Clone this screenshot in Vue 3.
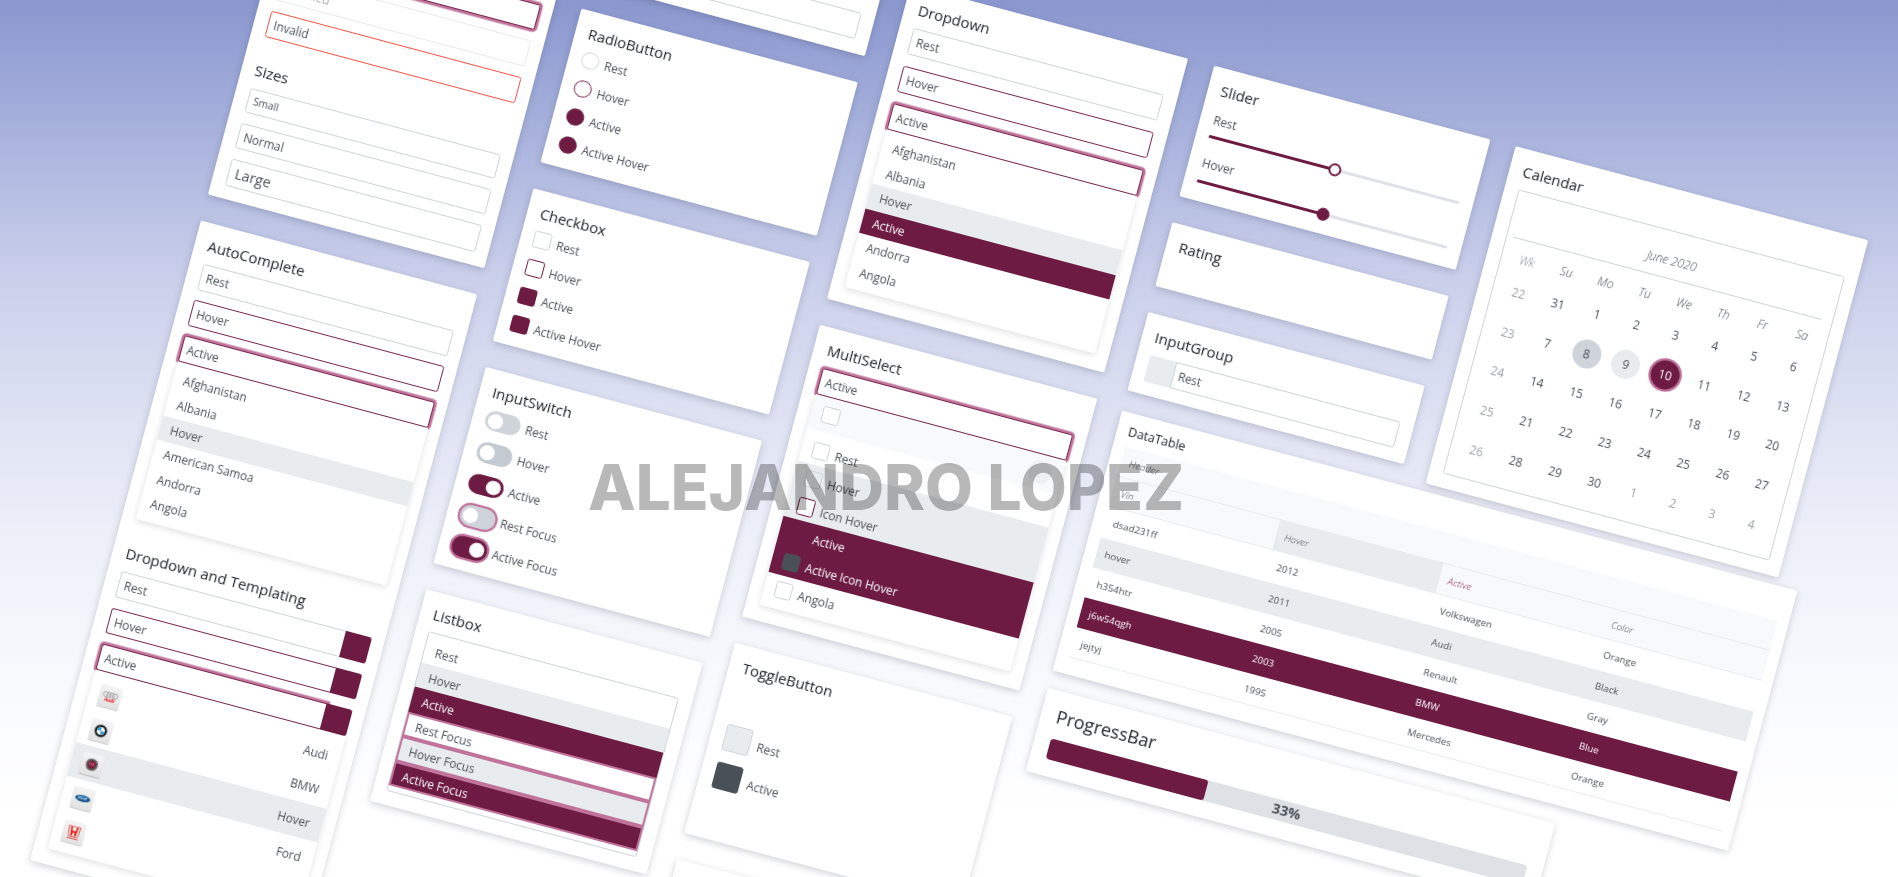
<script setup>
const countries = ['Afghanistan', 'Albania', 'Hover', 'American Samoa', 'Andorra', 'Angola']
const dropdownItems = ['Afghanistan', 'Albania', 'Hover', 'Active', 'Andorra', 'Angola']
const cars = [
  { brand: 'audi', label: 'Audi' },
  { brand: 'bmw', label: 'BMW' },
  { brand: 'fiat', label: 'Hover' },
  { brand: 'ford', label: 'Ford' },
  { brand: 'honda', label: '' },
]
const choices = [
  { label: 'Rest', state: 'rest' },
  { label: 'Hover', state: 'hover' },
  { label: 'Active', state: 'active' },
  { label: 'Active Hover', state: 'active' },
]
const switches = [
  { label: 'Rest', state: 'rest' },
  { label: 'Hover', state: 'over' },
  { label: 'Active', state: 'on' },
  { label: 'Rest Focus', state: 'rest focus' },
  { label: 'Active Focus', state: 'on focus' },
]
const listItems = [
  { label: 'Rest', state: '' },
  { label: 'Hover', state: 'hover' },
  { label: 'Active', state: 'active' },
  { label: 'Rest Focus', state: 'ring' },
  { label: 'Hover Focus', state: 'hover ring' },
  { label: 'Active Focus', state: 'active ring' },
]
const multiItems = [
  { label: 'Rest', row: '', box: 'rest' },
  { label: 'Hover', row: 'hover', box: 'clear' },
  { label: 'Icon Hover', row: 'hover', box: 'hover' },
  { label: 'Active', row: 'active', box: 'active' },
  { label: 'Active Icon Hover', row: 'active', box: 'dark' },
  { label: 'Angola', row: '', box: 'rest' },
]
const tableRows = [
  { cells: ['dsad231ff', '2012', 'Volkswagen', 'Orange'], state: '' },
  { cells: ['hover', '2011', 'Audi', 'Black'], state: 'hover' },
  { cells: ['h354htr', '2005', 'Renault', 'Gray'], state: '' },
  { cells: ['j6w54qgh', '2003', 'BMW', 'Blue'], state: 'active' },
  { cells: ['jejtyj', '1995', 'Mercedes', 'Orange'], state: 'last' },
]
const weekDays = ['Wk', 'Su', 'Mo', 'Tu', 'We', 'Th', 'Fr', 'Sa']
const weeks = [
  [22, 31, 1, 2, 3, 4, 5, 6],
  [23, 7, 8, 9, 10, 11, 12, 13],
  [24, 14, 15, 16, 17, 18, 19, 20],
  [25, 21, 22, 23, 24, 25, 26, 27],
  [26, 28, 29, 30, 1, 2, 3, 4],
]
function dayClass(w, d) {
  if (d === 0 || (w === 4 && d > 3)) return 'muted'
  if (w === 1 && d === 2) return 'today'
  if (w === 1 && d === 3) return 'over'
  if (w === 1 && d === 4) return 'picked'
  return ''
}
const progress = 33
</script>

<template>
  <main class="scene">
    <div class="board">
      <section class="column">
        <article class="card inputs">
          <div class="field focus"></div>
          <div class="field disabled">Disabled</div>
          <div class="field invalid">Invalid</div>
          <h2 class="sizes">Sizes</h2>
          <div class="field small">Small</div>
          <div class="field">Normal</div>
          <div class="field large">Large</div>
        </article>

        <article class="card autocomplete">
          <h2>AutoComplete</h2>
          <div class="stack">
            <div class="field">Rest</div>
            <div class="field hover">Hover</div>
            <div class="field focus">Active</div>
          </div>
          <ul class="panel">
            <li v-for="c in countries" :key="c" :class="{ hover: c === 'Hover' }">{{ c }}</li>
          </ul>
          <h2 class="second">Dropdown and Templating</h2>
          <div class="stack templ">
            <div class="group"><div class="field">Rest</div><i class="btn"></i></div>
            <div class="group"><div class="field hover">Hover</div><i class="btn"></i></div>
            <div class="group"><div class="field focus">Active</div><i class="btn"></i></div>
          </div>
          <ul class="panel car-panel">
            <li v-for="c in cars" :key="c.brand" :class="{ hover: c.label === 'Hover' }">
              <span class="tile">
                <svg viewBox="0 0 22 22" width="22" height="22">
                  <g v-if="c.brand === 'audi'">
                    <g fill="none" stroke="#9a9a9a" stroke-width=".8">
                      <circle cx="6.4" cy="9" r="2.5" /><circle cx="9.6" cy="9" r="2.5" />
                      <circle cx="12.8" cy="9" r="2.5" /><circle cx="16" cy="9" r="2.5" />
                    </g>
                    <text x="11.2" y="16" class="audi-name">Audi</text>
                  </g>
                  <g v-else-if="c.brand === 'bmw'">
                    <circle cx="11" cy="11" r="6.3" fill="#17191b" />
                    <circle cx="11" cy="11" r="6" fill="none" stroke="#70767a" stroke-width=".5" />
                    <circle cx="11" cy="11" r="4" fill="#fff" />
                    <path d="M11 11V7.2A3.8 3.8 0 0 0 7.2 11ZM11 11V14.8A3.8 3.8 0 0 0 14.8 11Z" fill="#3a9bd0" />
                  </g>
                  <g v-else-if="c.brand === 'fiat'">
                    <circle cx="11" cy="11" r="6.2" fill="#4e4b4c" />
                    <circle cx="11" cy="11" r="5.5" fill="none" stroke="#a09c9c" stroke-width=".7" />
                    <path d="M7.1 8.2Q11 6.6 14.9 8.2Q15.2 13 11 15.2Q6.8 13 7.1 8.2Z" fill="#8d1238" />
                    <path d="M8.5 9v3.2M8.5 9h1.2M8.5 10.4h1M10.6 9v3.2M11.6 12.2L12.3 9l.7 3.2M13.5 9h1" stroke="#c98a9c" stroke-width=".5" fill="none" />
                  </g>
                  <g v-else-if="c.brand === 'ford'">
                    <ellipse cx="11" cy="11" rx="8.1" ry="3.7" fill="#b9c4cc" />
                    <ellipse cx="11" cy="11" rx="7.6" ry="3.2" fill="#17568f" />
                    <ellipse cx="11" cy="9.6" rx="5.8" ry="1.4" fill="#4c9bd2" opacity=".6" />
                    <path d="M6 12.2Q7.3 9 9 9.8M6.4 11h2M9.4 11.9q-.4-1.6.7-1.2q.6 1.1-.7 1.2M11.2 12l.4-1.4q.8-.4 1 0M14.6 9.3l-.6 2.6q-1.2.2-.9-.8q.4-.8 1.1-.4" fill="none" stroke="#e9f2f8" stroke-width=".6" />
                  </g>
                  <g v-else>
                    <path d="M5 5.2h12l-1.2 9.2q-.2 1-1.2 1H7.4q-1 0-1.2-1Z" fill="none" stroke="#e5352d" stroke-width=".8" />
                    <path d="M7.1 5.8h1.8l.5 3.8h3.2l.5-3.8h1.8l-1.2 8.8h-1.6l-.3-3.2h-1.6l-.3 3.2H8.3Z" fill="#e5261f" />
                    <path d="M5.6 17.4h10.8" stroke="#e5352d" stroke-width="1.1" stroke-dasharray="1.4 .5" />
                  </g>
                </svg>
              </span>
              <span>{{ c.label }}</span>
            </li>
          </ul>
        </article>
      </section>

      <section class="column">
        <article class="card above"><div class="field"></div></article>

        <article class="card radio-card">
          <h2>RadioButton</h2>
          <label v-for="c in choices" :key="c.label" class="choice">
            <i class="box round" :class="c.state"></i><span>{{ c.label }}</span>
          </label>
        </article>

        <article class="card check-card">
          <h2>Checkbox</h2>
          <label v-for="c in choices" :key="c.label" class="choice">
            <i class="box" :class="c.state"></i><span>{{ c.label }}</span>
          </label>
        </article>

        <article class="card switch-card">
          <h2>InputSwitch</h2>
          <label v-for="s in switches" :key="s.label" class="choice switch-row">
            <i class="switch" :class="s.state"></i><span>{{ s.label }}</span>
          </label>
        </article>

        <article class="card list-card">
          <h2>Listbox</h2>
          <ul class="listbox">
            <li v-for="l in listItems" :key="l.label" :class="l.state">{{ l.label }}</li>
          </ul>
        </article>
      </section>

      <section class="column">
        <article class="card dropdown-card">
          <h2>Dropdown</h2>
          <div class="stack wide">
            <div class="field">Rest</div>
            <div class="field hover">Hover</div>
            <div class="field focus">Active</div>
          </div>
          <ul class="panel">
            <li v-for="d in dropdownItems" :key="d" :class="d.toLowerCase()">{{ d }}</li>
          </ul>
        </article>

        <article class="card multi-card">
          <h2>MultiSelect</h2>
          <div class="field focus">Active</div>
          <div class="panel multi">
            <header><i class="box"></i><i class="close"></i></header>
            <ul>
              <li v-for="m in multiItems" :key="m.label" :class="m.row">
                <i class="box" :class="m.box"></i><span>{{ m.label }}</span>
              </li>
            </ul>
          </div>
        </article>

        <article class="card toggle-card">
          <h2>ToggleButton</h2>
          <div class="toggles">
            <label class="toggle"><i></i><span>Rest</span></label>
            <label class="toggle on"><i></i><span>Active</span></label>
          </div>
        </article>

        <article class="card tail"></article>
      </section>

      <section class="wing">
        <div class="wing-top">
          <div class="column">
            <article class="card slider-card">
              <h2>Slider</h2>
              <p>Rest</p>
              <div class="slider"><i class="fill"></i><i class="knob"></i></div>
              <p class="next">Hover</p>
              <div class="slider"><i class="fill"></i><i class="knob solid"></i></div>
            </article>
            <article class="card rating-card"><h2>Rating</h2></article>
            <article class="card group-card">
              <h2>InputGroup</h2>
              <div class="addon-group"><i class="addon"></i><div class="field">Rest</div></div>
            </article>
          </div>

          <article class="card calendar-card">
            <h2>Calendar</h2>
            <div class="calendar">
              <header>June 2020</header>
              <div class="week names">
                <span v-for="d in weekDays" :key="d">{{ d }}</span>
              </div>
              <div v-for="(week, w) in weeks" :key="w" class="week">
                <span v-for="(day, d) in week" :key="d"><b :class="dayClass(w, d)">{{ day }}</b></span>
              </div>
            </div>
          </article>
        </div>

        <article class="card table-card">
          <h2>DataTable</h2>
          <div class="table">
            <div class="tr head top"><span>Header</span></div>
            <div class="tr head">
              <span>Vin</span><span class="over">Hover</span><span class="sorted">Active</span><span>Color</span>
            </div>
            <div v-for="(r, i) in tableRows" :key="i" class="tr" :class="r.state">
              <span v-for="c in r.cells" :key="c">{{ c }}</span>
            </div>
          </div>
        </article>

        <article class="card progress-card">
          <h2>ProgressBar</h2>
          <div class="progress">
            <i :style="{ width: progress + '%' }"></i>
            <b>{{ progress }}%</b>
          </div>
        </article>
      </section>
    </div>

    <svg class="watermark" width="600" height="60" viewBox="0 0 600 60">
      <text x="0" y="51.6" textLength="385" lengthAdjust="spacingAndGlyphs">ALEJANDRO</text>
      <text x="399.5" y="51.6" textLength="196.5" lengthAdjust="spacingAndGlyphs">LOPEZ</text>
    </svg>
  </main>
</template>

<style>
html,
body {
  margin: 0;
  overflow: hidden;
}
</style>

<style scoped>
.scene {
  position: relative;
  width: 100vw;
  height: 100vh;
  overflow: hidden;
  font: 11.8px/1 'Open Sans', 'Noto Sans', sans-serif;
  color: #495057;
  background: linear-gradient(#8a97cf 0%, #abb5de 16.6%, #cdd2ec 33.4%, #dce0f2 46%, #eef0f9 62%, #f8f9fd 77%, #fff 93%);
}
.scene * { box-sizing: border-box; }
i { font-style: normal; }
ul { list-style: none; margin: 0; padding: 0; }
p { margin: 0; }

.board {
  display: flex;
  align-items: flex-start;
  gap: 26.4px;
  width: 1640px;
  transform-origin: 0 0;
  transform: rotate(14.95deg) translate(251px, -249.8px);
  will-change: transform;
}
.column { display: flex; flex-direction: column; gap: 27px; flex: none; width: 286.3px; }
.card {
  flex: none;
  padding: 0 13.5px;
  background: #fff;
  border-radius: 2px;
  box-shadow: 0 2px 7px rgba(40, 44, 70, .22);
}
h2 {
  margin: 0;
  height: 41.3px;
  padding-top: 13.3px;
  font-size: 14.9px;
  line-height: 18px;
  font-weight: 400;
  color: #212529;
  white-space: nowrap;
}

.field {
  height: 26.6px;
  padding-left: 5.4px;
  border: 1px solid #ced4da;
  border-radius: 2.5px;
  line-height: 25px;
  background: #fff;
}
.field.hover { border-color: #7a2a50; }
.field.focus { border-color: #7a2a50; box-shadow: 0 0 0 2.4px #c0739b; }
.field.invalid { border-color: #f2564a; }
.field.disabled { opacity: .5; }
.field.small { height: 25px; font-size: 10.3px; line-height: 23px; }
.field.large { height: 27.8px; font-size: 14.2px; line-height: 26px; padding-left: 6.4px; }
.stack { display: flex; flex-direction: column; gap: 10.2px; }
.stack.wide { gap: 12.4px; }

.inputs { display: flex; flex-direction: column; height: 384.2px; justify-content: flex-end; gap: 11px; padding-bottom: 13.2px; }
.inputs .sizes { height: 31px; padding-top: 14px; }

.panel {
  position: relative;
  padding: 5.3px 0;
  background: #fff;
  border-radius: 0 0 3px 3px;
  box-shadow: 0 2px 6px rgba(0, 0, 0, .12);
}
.panel li { height: 25.5px; padding-left: 11px; line-height: 25.5px; }
li.hover { background: #e9ecef; }
li.active { background: #6d1b43; color: #fff; }

.autocomplete { height: 661.4px; }
.autocomplete .second { margin-top: 12.8px; height: 41px; }
.templ { gap: 10.9px; }
.group { display: flex; }
.group .field { flex: 1; border-right: 0; border-radius: 2.5px 0 0 2.5px; margin-right: -1px; }
.btn { position: relative; width: 27.3px; background: #6d1b43; border-radius: 0 2.5px 2.5px 0; }
.panel.car-panel li { display: flex; justify-content: space-between; height: 35px; padding: 7.3px 12.2px 0 10.8px; line-height: 23px; }
.tile { width: 22px; height: 22px; border-radius: 1.5px; background: linear-gradient(#f4f4f4, #e2e2e2); box-shadow: 0 1px 1px rgba(0, 0, 0, .2); }
.tile svg { display: block; }
.audi-name { font: italic 700 5px 'Open Sans', sans-serif; text-anchor: middle; fill: #e8202c; }

.above { height: 80.9px; padding-top: 40.4px; }
.radio-card { height: 158.9px; }
.check-card { height: 157.9px; }
.switch-card { height: 203.1px; }
.radio-card h2, .check-card h2, .switch-card h2 { height: 40.2px; }
.choice { display: flex; align-items: flex-start; gap: 6.3px; height: 29px; }
.choice span { line-height: 19px; }
.box { flex: none; width: 17.4px; height: 17.4px; border: 1px solid #ced4da; border-radius: 2.5px; background: #fff; }
.box.round { border-radius: 50%; }
.box.hover { border-color: #6d1b43; }
.box.active { background: #6d1b43; border-color: #6d1b43; }
.box.dark { background: #495057; border-color: #495057; }
.box.clear { background: transparent; }
.choice.switch-row { height: 32.4px; gap: 5.8px; }
.choice.switch-row span { line-height: 21px; }
.switch { flex: none; width: 35.4px; height: 20.6px; padding: 3px; border-radius: 10.3px; background: #ced4da; }
.switch::before { content: ''; display: block; width: 14.7px; height: 14.7px; border-radius: 50%; background: #fff; }
.switch.over { background: #c3cad1; }
.switch.on { background: #6d1b43; }
.switch.on::before { margin-left: 14.7px; }
.switch.focus { box-shadow: 0 0 0 2.2px #c0739b; }

.list-card { height: 219px; }
.list-card h2 { height: 40.6px; }
.listbox { padding: 5px 0; border: 1px solid #ced4da; border-radius: 2.5px; }
.listbox li { height: 25.5px; padding-left: 10.8px; line-height: 26px; }
.listbox .ring { box-shadow: inset 0 0 0 1.9px #c0739b; }

.dropdown-card { height: 325.1px; }
.multi-card { height: 301.8px; }
.panel.multi { padding-top: 0; }
.multi header { display: flex; justify-content: space-between; align-items: center; height: 34.6px; padding: 0 11.6px; background: #f8f9fa; margin-bottom: 5.6px; }
.close { width: 23px; height: 23px; border-radius: 50%; background: #eef0f2; }
.panel.multi li { display: flex; align-items: center; gap: 6px; height: 28.75px; padding-left: 11.2px; line-height: 20px; }
.multi li span { padding-top: 1px; }
.toggle-card { height: 196.8px; }
.toggles { padding-top: 38.4px; }
.toggle { display: flex; gap: 7px; height: 39px; }
.toggle i { width: 27.2px; height: 27.2px; border: 1px solid #ced4da; border-radius: 2.5px; background: #e9ecef; }
.toggle.on i { background: #495057; border-color: #495057; }
.toggle span { line-height: 31px; }
.tail { height: 120px; }

.wing { flex: none; width: 699px; margin-left: .5px; }
.wing-top { display: flex; gap: 26.4px; align-items: flex-start; }
.slider-card { height: 134.9px; }
.slider-card p { height: 27px; line-height: 22px; padding-left: .4px; }
.slider-card .next { margin-top: 16px; height: 26.4px; line-height: 19px; }
.slider { position: relative; height: 3px; border-radius: 2px; background: #dee2e6; }
.slider .fill { display: block; width: 50%; height: 100%; border-radius: 2px; background: #6d1b43; }
.slider .knob { position: absolute; left: calc(50% - 6px); top: -5px; width: 13px; height: 13px; border: 2px solid #6d1b43; border-radius: 50%; background: #fff; }
.slider .knob.solid { background: #6d1b43; }
.rating-card { height: 66.3px; }
.group-card { height: 81.3px; }
.group-card h2 { height: 41px; }
.addon-group { display: flex; }
.addon { width: 27px; background: #e9ecef; border-radius: 2.5px 0 0 2.5px; }
.addon-group .field { flex: 1; border-radius: 0 2.5px 2.5px 0; padding-left: 4.4px; }

.calendar-card { flex: none; width: 364.8px; height: 348.6px; }
.calendar { height: 294px; padding: 0 5.8px; border: 1px solid #ced4da; border-radius: 2.5px; }
.calendar header { height: 47px; margin-right: 4.4px; padding-top: 20px; border-bottom: 1px solid #ced4da; text-align: center; line-height: 17px; font-style: italic; font-weight: 300; }
.week { display: grid; grid-template-columns: repeat(8, 40.65px); height: 40.6px; align-items: center; text-align: center; }
.week.names { height: 32.2px; padding-top: 6.6px; font-style: italic; font-weight: 300; }
.week.names span:first-child { opacity: .65; }
.week b { display: block; width: 29px; height: 29px; margin: 0 auto; border-radius: 50%; font-weight: 400; line-height: 29px; }
.week .muted { opacity: .55; }
.week .today { background: #ced4da; }
.week .over { background: #e9ecef; }
.week .picked { background: #6d1b43; color: #fff; box-shadow: 0 0 0 2.3px #c0739b; }

.table-card { width: 699px; height: 269px; margin-top: 8.6px; padding: 0 10.4px 0 12px; font-size: 9.8px; }
.table-card h2 { height: 34.1px; padding-top: 9.4px; font-size: 12.5px; }
.tr { display: grid; grid-template-columns: repeat(4, 1fr); height: 31.1px; line-height: 31px; }
.tr span { padding-left: 9px; }
.tr.head { background: #f8f9fa; border-bottom: 1px solid #e9ecef; font-style: italic; font-weight: 300; }
.tr .over, .tr.hover { background: #e9ecef; }
.tr .sorted { color: #8c2a58; }
.tr.active { background: #6d1b43; color: #fff; }
.tr.last { border-bottom: 1px solid #e9ecef; }

.progress-card {
  width: 525.6px;
  height: 85.6px;
  margin-top: 18px;
  padding: 0 16.3px;
  border-radius: 3px;
}
.progress-card h2 { height: 48.2px; padding-top: 16.3px; font-size: 18px; }
.progress { position: relative; height: 20.6px; border-radius: 3px; background: #dee2e6; overflow: hidden; text-align: center; }
.progress i { position: absolute; left: 0; top: 0; bottom: 0; border-radius: 3px; background: #6d1b43; }
.progress b { font-size: 14.2px; line-height: 20px; }

.watermark { position: absolute; left: 588px; top: 458px; }
.watermark text { font: 800 63.5px Inter, 'Open Sans', sans-serif; fill: #000; fill-opacity: .28; }
</style>
